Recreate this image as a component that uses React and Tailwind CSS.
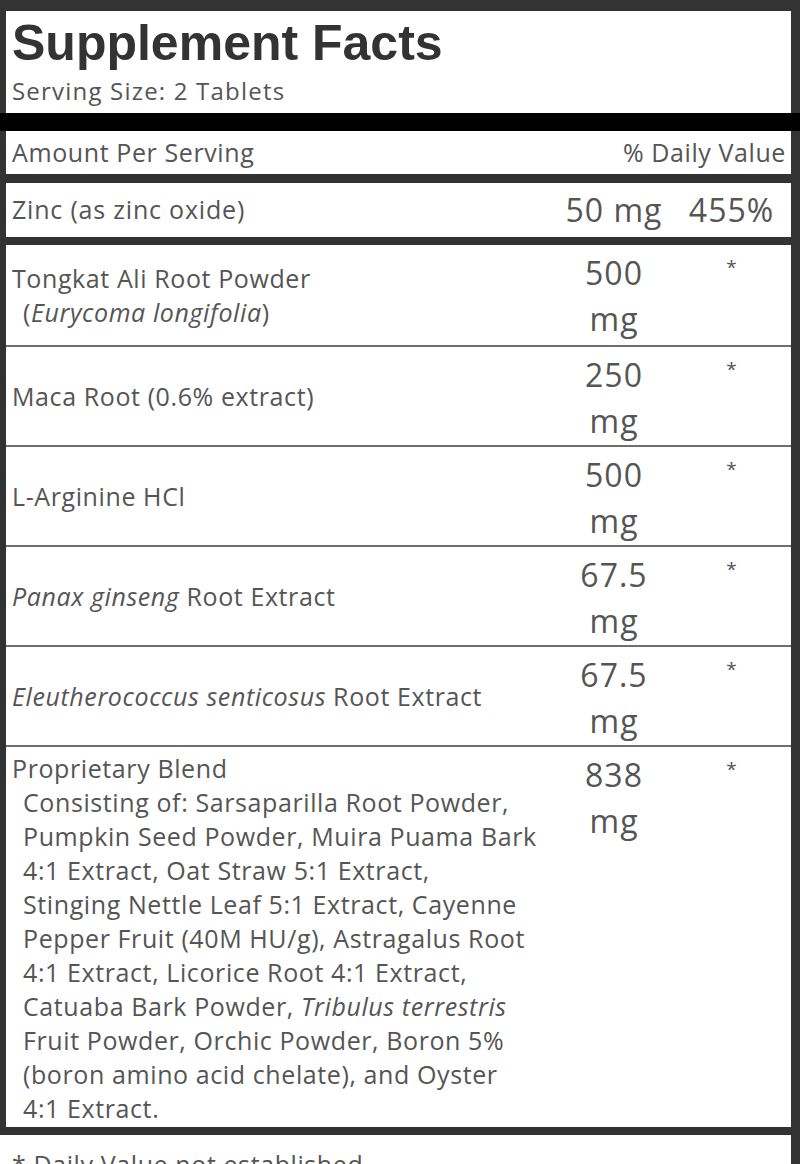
import React from "react";

const ROWS = [
  {
    name: [<>Tongkat Ali Root Powder</>],
    sub: [<>(<i>Eurycoma longifolia</i>)</>],
    amount: ["500", "mg"],
  },
  { name: [<>Maca Root (0.6% extract)</>], sub: [], amount: ["250", "mg"] },
  { name: [<>L-Arginine HCl</>], sub: [], amount: ["500", "mg"] },
  {
    name: [<><i>Panax ginseng</i> Root Extract</>],
    sub: [],
    amount: ["67.5", "mg"],
  },
  {
    name: [<><i>Eleutherococcus senticosus</i> Root Extract</>],
    sub: [],
    amount: ["67.5", "mg"],
  },
];

// blend text is broken by hand so the lines land where the label has them
const BLEND = [
  <>Consisting of: Sarsaparilla Root Powder,</>,
  <>Pumpkin Seed Powder, Muira Puama Bark</>,
  <>4:1 Extract, Oat Straw 5:1 Extract,</>,
  <>Stinging Nettle Leaf 5:1 Extract, Cayenne</>,
  <>Pepper Fruit (40M HU/g), Astragalus Root</>,
  <>4:1 Extract, Licorice Root 4:1 Extract,</>,
  <>Catuaba Bark Powder, <i>Tribulus terrestris</i></>,
  <>Fruit Powder, Orchic Powder, Boron 5%</>,
  <>(boron amino acid chelate), and Oyster</>,
  <>4:1 Extract.</>,
];

const font = { fontFamily: '"Open Sans", "Noto Sans", sans-serif' };

const Amount = ({ lines }) => (
  <div className="w-[100px] shrink-0 pt-[5px] text-center text-[32px] leading-[46px] tracking-[1px]">
    {lines.map((l, i) => (
      <div key={i}>{l}</div>
    ))}
  </div>
);

const Star = () => (
  <div className="w-[127px] shrink-0 pt-[12px] pl-[8px] text-center text-[19px] leading-[20px]">
    *
  </div>
);

const IngredientRow = ({ row, first }) => (
  <div className={`flex min-h-[100px] ${first ? "" : "border-t-2 border-[#6e6e6e]"}`}>
    <div className="flex flex-1 flex-col justify-center py-[4px] pl-[6px] text-[25px] leading-[34px] tracking-[0.6px]">
      {row.name.map((n, i) => (
        <div key={i} className="whitespace-nowrap">{n}</div>
      ))}
      {row.sub.map((s, i) => (
        <div key={i} className="whitespace-nowrap pl-[11px]">{s}</div>
      ))}
    </div>
    <Amount lines={row.amount} />
    <Star />
  </div>
);

export default function App() {
  return (
    <div className="w-[800px] h-[1164px] overflow-hidden bg-white text-[#555555]" style={font}>
      {/* header */}
      <div className="border-t-[11px] border-l-[6px] border-r-[9px] border-[#333333] h-[113px] pl-[6px]">
        <h1
          className="pt-[7px] text-[50px] font-bold leading-[50px] text-[#333333]"
          style={{ fontFamily: '"Liberation Sans", Arial, sans-serif' }}
        >
          Supplement Facts
        </h1>
        <div className="mt-[8px] text-[24px] leading-[30px] tracking-[1.2px]">Serving Size: 2 Tablets</div>
      </div>

      <div className="h-[18px] bg-black" />

      <div className="border-l-[6px] border-r-[9px] border-[#333333]">
        <div className="flex h-[43px] items-center justify-between pl-[6px] pr-[5px] text-[25px] tracking-[0.6px]">
          <span>Amount Per Serving</span>
          <span>% Daily Value</span>
        </div>
        <div className="h-[9px] bg-[#333333]" />
        <div className="flex h-[54px] items-center">
          <div className="flex-1 pl-[6px] text-[25px] tracking-[0.8px]">Zinc (as zinc oxide)</div>
          <div className="w-[100px] shrink-0 text-center text-[32px] tracking-[1px] whitespace-nowrap">50 mg</div>
          <div className="w-[127px] shrink-0 pl-[8px] text-center text-[32px] tracking-[1px]">455%</div>
        </div>
        <div className="h-[8px] bg-[#333333]" />

        {ROWS.map((r, i) => (
          <IngredientRow key={i} row={r} first={i === 0} />
        ))}

        <div className="flex h-[382px] border-t-2 border-[#6e6e6e]">
          <div className="flex-1 py-[4px] pl-[6px] text-[25px] leading-[34px] tracking-[0.6px]">
            <div>Proprietary Blend</div>
            {BLEND.map((l, i) => (
              <div key={i} className="whitespace-nowrap pl-[11px]">{l}</div>
            ))}
          </div>
          <Amount lines={["838", "mg"]} />
          <Star />
        </div>
        <div className="h-[8px] bg-[#333333]" />
      </div>

      <div className="border-r-[9px] border-[#333333] pl-[12px] pt-[12px] text-[25px] leading-[34px] tracking-[0.6px]">
        * Daily Value not established.
      </div>
    </div>
  );
}
